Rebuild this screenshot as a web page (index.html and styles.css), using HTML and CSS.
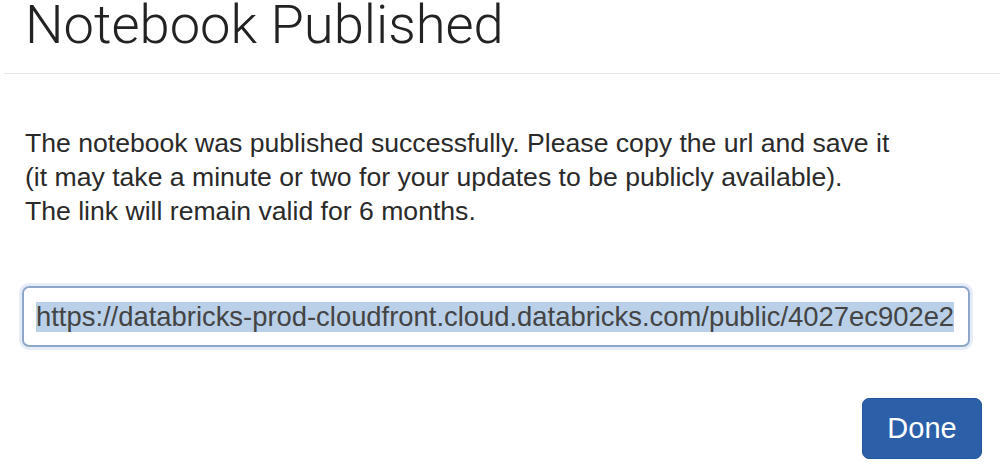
FILE: index.html
```html
<!DOCTYPE html>
<html lang="en">
<head>
<meta charset="utf-8">
<title>Notebook Published</title>
<link rel="stylesheet" href="styles.css">
</head>
<body>
<div class="modal">
  <div class="modal-header">
    <h1 class="modal-title">Notebook Published</h1>
  </div>
  <div class="modal-body">
    <p class="message">The notebook was published successfully. Please copy the url and save it<br>(it may take a minute or two for your updates to be publicly available).<br>The link will remain valid for 6 months.</p>
    <div class="url-field"><span class="url-selected">https://databricks-prod-cloudfront.cloud.databricks.com/public/4027ec902e2</span></div>
  </div>
  <div class="modal-footer">
    <button class="btn-primary" type="button">Done</button>
  </div>
</div>
</body>
</html>
```
FILE: styles.css
```css
html, body {
  margin: 0;
  padding: 0;
  background: #ffffff;
}
body {
  font-family: "Liberation Sans", Arial, sans-serif;
  color: #2b2b2b;
}
.modal {
  width: 1004px;
  height: 465px;
  overflow: hidden;
  display: flex;
  flex-direction: column;
}
.modal-header {
  margin: 0 4px;
  padding: 0 0 0 21px;
  height: 73px;
  border-bottom: 1px solid #e6e6e6;
}
.modal-title {
  margin: 0;
  font-family: Roboto, "Liberation Sans", sans-serif;
  font-weight: 300;
  font-size: 54.3px;
  line-height: 49px;
  color: #222222;
}
.modal-body {
  padding: 52px 0 0 25px;
}
.message {
  margin: 0;
  font-size: 26.6px;
  line-height: 34px;
  color: #2a2a2a;
}
.url-field {
  margin: 58px 0 0 -3px;
  width: 932px;
  height: 57px;
  border: 2px solid #8ea7c9;
  border-radius: 7px;
  box-shadow: 0 0 0 3px #e6edf6;
  box-sizing: content-box;
  padding: 0 0 0 12px;
  display: flex;
  align-items: center;
  overflow: hidden;
  white-space: nowrap;
  font-size: 27.4px;
  color: #444444;
}
.url-selected {
  background: #b9d0e8;
  line-height: 30px;
}
.modal-footer {
  display: flex;
  justify-content: flex-end;
  padding: 51px 22px 0 0;
}
.btn-primary {
  width: 120px;
  height: 61px;
  border: 1px solid #24569c;
  border-radius: 7px;
  background: #2b60a9;
  color: #ffffff;
  font-family: "Liberation Sans", Arial, sans-serif;
  font-size: 29px;
  padding: 0;
}
```
